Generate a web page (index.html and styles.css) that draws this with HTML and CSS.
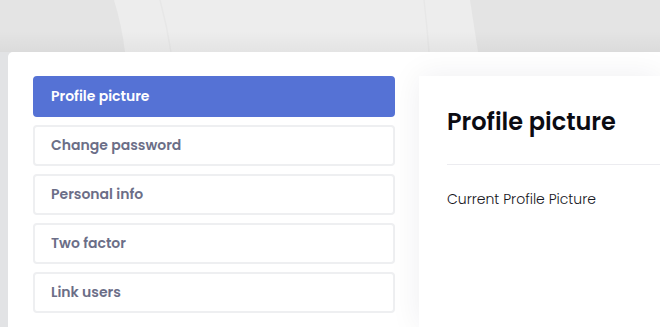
FILE: index.html
```html
<!DOCTYPE html>
<html lang="en">
<head>
<meta charset="utf-8">
<title>Profile settings</title>
<link rel="stylesheet" href="styles.css">
</head>
<body>
<div class="hero">
  <svg class="hero-art" width="660" height="52" viewBox="0 0 660 52" preserveAspectRatio="none" aria-hidden="true">
    <defs>
      <linearGradient id="fade" x1="0" y1="0" x2="0" y2="1">
        <stop offset="0" stop-color="#000" stop-opacity="0"/>
        <stop offset="0.6" stop-color="#000" stop-opacity="0"/>
        <stop offset="1" stop-color="#000" stop-opacity="0.04"/>
      </linearGradient>
    </defs>
    <rect width="660" height="52" fill="#e4e4e4"/>
    <path d="M114 0 Q122 26 125 52 L478 52 Q474 26 470 0 Z" fill="#ededed"/>
    <path d="M160 0 Q167 26 171 52" stroke="#e7e7e7" stroke-width="1.5" fill="none"/>
    <path d="M424 0 Q427 26 429 52" stroke="#e7e7e7" stroke-width="1.5" fill="none"/>
    <rect width="660" height="52" fill="url(#fade)"/>
  </svg>
</div>
<main class="card">
  <nav class="menu">
    <a class="menu-item active">Profile picture</a>
    <a class="menu-item">Change password</a>
    <a class="menu-item">Personal info</a>
    <a class="menu-item">Two factor</a>
    <a class="menu-item">Link users</a>
  </nav>
  <section class="panel">
    <h1 class="panel-title">Profile picture</h1>
    <hr class="divider">
    <p class="label">Current Profile Picture</p>
  </section>
</main>
</body>
</html>
```
FILE: styles.css
```css
html, body {
  margin: 0;
  padding: 0;
}
body {
  background: #e2e3e5;
  font-family: Poppins, Inter, "Noto Sans", sans-serif;
  overflow: hidden;
  height: 327px;
}
.hero {
  height: 52px;
}
.hero-art {
  display: block;
  width: 100%;
  height: 52px;
}
.card {
  box-sizing: border-box;
  height: 275px;
  margin-left: 8px;
  background: #fff;
  border-top-left-radius: 5px;
  display: flex;
  gap: 24px;
  padding: 24px 0 0 25px;
  overflow: hidden;
}
.menu {
  width: 362px;
  flex: none;
  align-self: flex-start;
  display: flex;
  flex-direction: column;
  gap: 8px;
}
.menu-item {
  box-sizing: border-box;
  height: 41px;
  display: flex;
  align-items: center;
  padding-left: 16px;
  border: 2px solid #eeeff1;
  border-radius: 4px;
  font-size: 14px;
  font-weight: 600;
  color: #6b6e87;
}
.menu-item.active {
  background: #5572d5;
  border-color: #5572d5;
  color: #fff;
}
.panel {
  flex: 1;
  background: #fff;
  padding: 28px 0 0 28px;
  box-shadow: 0 0 30px rgba(20, 20, 60, 0.07);
}
.panel-title {
  margin: 0;
  font-size: 24px;
  font-weight: 600;
  line-height: 36px;
  color: #0b0b12;
}
.divider {
  margin: 24px 0 0;
  border: 0;
  border-top: 1px solid #ececf0;
}
.label {
  margin: 24px 0 0;
  font-size: 14px;
  font-weight: 300;
  color: #15151c;
}
```
